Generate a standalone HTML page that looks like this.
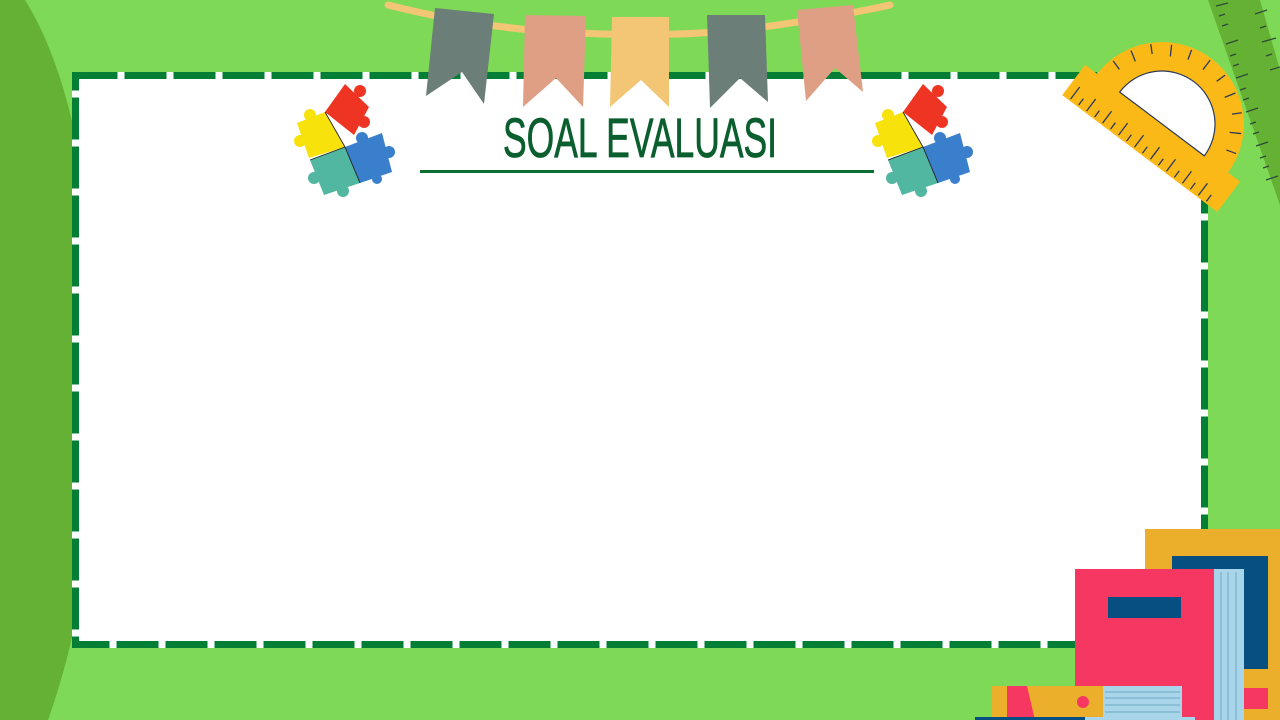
<!DOCTYPE html>
<html><head><meta charset="utf-8"><style>
html,body{margin:0;padding:0;width:1280px;height:720px;overflow:hidden;background:#7ed957}
svg{display:block}
</style></head><body>
<svg width="1280" height="720" viewBox="0 0 1280 720" xmlns="http://www.w3.org/2000/svg">
<rect width="1280" height="720" fill="#7ed957"/>
<path d="M0,0 L25,0 C75,80 98,220 98,380 C98,520 80,630 48,720 L0,720 Z" fill="#64b133"/>
<path d="M1208,0 L1260,0 L1280,70 L1280,205 Z" fill="#64b133"/>
<g stroke="#2f4a3a" stroke-width="1.3">
<line x1="1216" y1="6" x2="1228" y2="3"/><line x1="1219" y1="16" x2="1225" y2="14"/><line x1="1222" y1="26" x2="1228" y2="24"/><line x1="1226" y1="44" x2="1238" y2="40"/><line x1="1230" y1="56" x2="1236" y2="54"/><line x1="1233" y1="66" x2="1239" y2="64"/><line x1="1236" y1="78" x2="1248" y2="74"/><line x1="1240" y1="90" x2="1246" y2="88"/><line x1="1243" y1="100" x2="1249" y2="98"/><line x1="1246" y1="112" x2="1258" y2="108"/><line x1="1250" y1="124" x2="1256" y2="122"/><line x1="1253" y1="134" x2="1259" y2="132"/><line x1="1256" y1="146" x2="1268" y2="142"/><line x1="1260" y1="158" x2="1266" y2="156"/><line x1="1263" y1="168" x2="1269" y2="166"/><line x1="1266" y1="180" x2="1278" y2="176"/>
<line x1="1255" y1="14" x2="1267" y2="10"/><line x1="1260" y1="28" x2="1266" y2="26"/><line x1="1262" y1="42" x2="1276" y2="38"/><line x1="1266" y1="56" x2="1272" y2="54"/><line x1="1270" y1="70" x2="1280" y2="67"/>
</g>
<rect x="72" y="72" width="1136" height="576" fill="#fff"/>
<rect x="75.5" y="75.5" width="1129" height="569" fill="none" stroke="#037f35" stroke-width="7" stroke-dasharray="42 7"/>
<path d="M388,5 Q480,28 560,32 Q660,38 740,30 Q820,20 890,5" fill="none" stroke="#f2c674" stroke-width="7" stroke-linecap="round"/>
<path d="M435,8 L494,14 L484,104 L462,72 L426,96 Z" fill="#6b7e78"/>
<path d="M525,15 L586,16 L583,107 L556,78 L523,107 Z" fill="#df9f84"/>
<path d="M612,17 L669,17 L669,107 L641,80 L610,107 Z" fill="#f2c674"/>
<path d="M707,15 L765,15 L768,102 L740,78 L710,108 Z" fill="#6b7e78"/>
<path d="M797,10 L853,5 L863,92 L835,68 L806,101 Z" fill="#df9f84"/>
<defs>
<g id="pz">
<polygon points="903,112 923,84 947,107 932,135" fill="#ee3524"/>
<circle cx="938" cy="91" r="6" fill="#ee3524"/><circle cx="942" cy="122" r="6" fill="#ee3524"/>
<polygon points="875,123 903,112 923,147 887,158" fill="#f8e20b"/>
<circle cx="888" cy="115" r="6" fill="#f8e20b"/><circle cx="878" cy="141" r="6" fill="#f8e20b"/>
<polygon points="888,160 923,147 938,183 902,195" fill="#52b7a0"/>
<circle cx="892" cy="178" r="6" fill="#52b7a0"/><circle cx="921" cy="191" r="6" fill="#52b7a0"/>
<polygon points="923,147 960,133 970,172 938,183" fill="#3a7fcc"/>
<circle cx="940" cy="138" r="6" fill="#3a7fcc"/><circle cx="967" cy="152" r="6" fill="#3a7fcc"/><circle cx="955" cy="179" r="5" fill="#3a7fcc"/>
<path d="M903,112 L923,147 L938,183 M888,160 L923,147" stroke="#222" stroke-width="0.9" fill="none"/>
</g>
</defs>
<use href="#pz"/>
<use href="#pz" transform="translate(-578,0)"/>
<text x="640" y="157" text-anchor="middle" font-family="Liberation Sans Narrow, Liberation Sans, sans-serif" font-size="56" fill="#0b5e2e" stroke="#0b5e2e" stroke-width="0.8" textLength="274" lengthAdjust="spacingAndGlyphs">SOAL EVALUASI</text>
<rect x="420" y="170" width="454" height="3" fill="#0b6e33"/>
<g transform="translate(1162 124) rotate(37)">
<path d="M-82,0 A82,82 0 0 1 82,0 Z" fill="#fbb917"/>
<rect x="-97" y="-1" width="194" height="38" fill="#fbb917"/>
<path d="M-53,0 A53,53 0 0 1 53,0 Z" fill="#fff" stroke="#2a3a5a" stroke-width="1.2"/>
<g stroke="#2a3a5a" stroke-width="1.3">
<line x1="-88" y1="20" x2="-88" y2="35"/><line x1="-78" y1="27" x2="-78" y2="35"/><line x1="-68" y1="20" x2="-68" y2="35"/><line x1="-58" y1="27" x2="-58" y2="35"/><line x1="-48" y1="20" x2="-48" y2="35"/><line x1="-38" y1="27" x2="-38" y2="35"/><line x1="-28" y1="20" x2="-28" y2="35"/><line x1="-18" y1="27" x2="-18" y2="35"/><line x1="-8" y1="20" x2="-8" y2="35"/><line x1="2" y1="27" x2="2" y2="35"/><line x1="12" y1="20" x2="12" y2="35"/><line x1="22" y1="27" x2="22" y2="35"/><line x1="32" y1="20" x2="32" y2="35"/><line x1="42" y1="27" x2="42" y2="35"/><line x1="52" y1="20" x2="52" y2="35"/><line x1="62" y1="27" x2="62" y2="35"/><line x1="72" y1="20" x2="72" y2="35"/><line x1="82" y1="27" x2="82" y2="35"/>
<line x1="0" y1="-80" x2="0" y2="-68"/><line x1="-40" y1="-69" x2="-34" y2="-59"/><line x1="40" y1="-69" x2="34" y2="-59"/><line x1="-69" y1="-40" x2="-59" y2="-34"/><line x1="69" y1="-40" x2="59" y2="-34"/><line x1="-21" y1="-77" x2="-18" y2="-67"/><line x1="21" y1="-77" x2="18" y2="-67"/><line x1="-57" y1="-57" x2="-50" y2="-50"/><line x1="57" y1="-57" x2="50" y2="-50"/><line x1="-77" y1="-21" x2="-67" y2="-18"/><line x1="77" y1="-21" x2="67" y2="-18"/>
</g>
</g>
<rect x="1145" y="529" width="135" height="191" fill="#ebaf2b"/>
<rect x="1172" y="556" width="96" height="113" fill="#074f80"/>
<rect x="1244" y="688" width="24" height="21" fill="#f63762"/>
<rect x="1075" y="569" width="140" height="151" fill="#f63762"/>
<rect x="1108" y="597" width="73" height="21" fill="#074f80"/>
<rect x="1214" y="569" width="30" height="151" fill="#a9d5eb"/>
<g stroke="#6aa9c2" stroke-width="1"><line x1="1221" y1="572" x2="1221" y2="720"/><line x1="1228" y1="572" x2="1228" y2="720"/><line x1="1236" y1="572" x2="1236" y2="720"/></g>
<rect x="992" y="686" width="111" height="34" fill="#ebaf2b"/>
<path d="M1007,686 L1027,686 L1035,720 L1007,720 Z" fill="#f63762"/>
<circle cx="1083" cy="702" r="6" fill="#f63762"/>
<rect x="1103" y="686" width="79" height="34" fill="#a9d5eb"/>
<g stroke="#6aa9c2" stroke-width="1"><line x1="1105" y1="692" x2="1180" y2="692"/><line x1="1105" y1="698" x2="1180" y2="698"/><line x1="1105" y1="705" x2="1180" y2="705"/><line x1="1105" y1="712" x2="1180" y2="712"/></g>
<rect x="975" y="717" width="110" height="3" fill="#074f80"/>
<rect x="1085" y="717" width="110" height="3" fill="#a9d5eb"/>
</svg>
</body></html>
